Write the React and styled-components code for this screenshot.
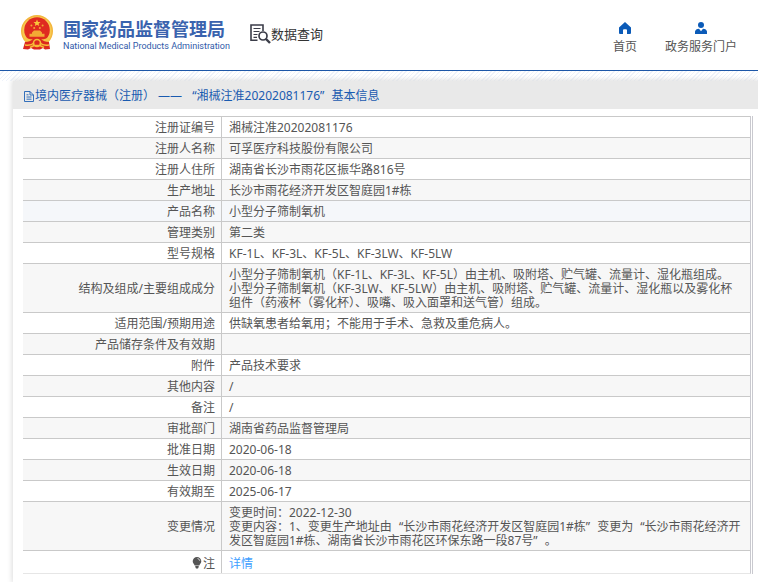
import React from 'react';
import styled, { createGlobalStyle } from 'styled-components';

const infoRows = [
  { label: '注册证编号', value: ['湘械注准20202081176'] },
  { label: '注册人名称', value: ['可孚医疗科技股份有限公司'] },
  { label: '注册人住所', value: ['湖南省长沙市雨花区振华路816号'] },
  { label: '生产地址', value: ['长沙市雨花经济开发区智庭园1#栋'] },
  { label: '产品名称', value: ['小型分子筛制氧机'], active: true },
  { label: '管理类别', value: ['第二类'] },
  { label: '型号规格', value: ['KF-1L、KF-3L、KF-5L、KF-3LW、KF-5LW'] },
  {
    label: '结构及组成/主要组成成分',
    value: [
      '小型分子筛制氧机（KF-1L、KF-3L、KF-5L）由主机、吸附塔、贮气罐、流量计、湿化瓶组成。',
      '小型分子筛制氧机（KF-3LW、KF-5LW）由主机、吸附塔、贮气罐、流量计、湿化瓶以及雾化杯组件（药液杯（雾化杯）、吸嘴、吸入面罩和送气管）组成。',
    ],
  },
  { label: '适用范围/预期用途', value: ['供缺氧患者给氧用；不能用于手术、急救及重危病人。'] },
  { label: '产品储存条件及有效期', value: [''] },
  { label: '附件', value: ['产品技术要求'] },
  { label: '其他内容', value: ['/'] },
  { label: '备注', value: ['/'] },
  { label: '审批部门', value: ['湖南省药品监督管理局'] },
  { label: '批准日期', value: ['2020-06-18'] },
  { label: '生效日期', value: ['2020-06-18'] },
  { label: '有效期至', value: ['2025-06-17'] },
  {
    label: '变更情况',
    value: [
      '变更时间：2022-12-30',
      '变更内容：1、变更生产地址由“长沙市雨花经济开发区智庭园1#栋”变更为“长沙市雨花经济开发区智庭园1#栋、湖南省长沙市雨花区环保东路一段87号”。',
    ],
  },
];

// curly quotes take a full character cell in Chinese text, pad the narrow latin ones
const padQuotes = (text) =>
  text.split(/([“”])/).map((part, idx) => {
    if (part === '“') return <OpenQuote key={idx}>{part}</OpenQuote>;
    if (part === '”') return <CloseQuote key={idx}>{part}</CloseQuote>;
    return part;
  });

const Emblem = () => (
  <svg width="34" height="36" viewBox="0 0 34 36" aria-hidden="true">
    <circle cx="17" cy="16" r="16" fill="#f3b63d" />
    <circle cx="17" cy="16" r="14.6" fill="#f8c951" />
    <circle cx="17" cy="15" r="12.8" fill="#df2a20" />
    <path d="M17 4.6l1 2.3 2.5.2-1.9 1.6.6 2.4-2.2-1.3-2.2 1.3.6-2.4-1.9-1.6 2.5-.2z" fill="#f9c83c" />
    <g fill="#f3a934">
      <circle cx="11.4" cy="10.5" r="1" />
      <circle cx="22.6" cy="10.5" r="1" />
      <circle cx="14.2" cy="13" r="1" />
      <circle cx="19.8" cy="13" r="1" />
      <path d="M12 17.4l2-2h6l2 2v1.4h2.5v3h-15v-3H12z" />
    </g>
    <path d="M4 22.5q13 4.500 26 0l-2 6H6z" fill="#f5c443" />
    <path d="M5 27q5 0 8-3 4-2 8 0 3 3 8 3l1 7-5 .5-2-1.500-3 1.500h-6l-3-1.500-3 1.500-5-.5z" fill="#dc271f" />
    <circle cx="17" cy="28" r="3.500" fill="none" stroke="#f6bd38" strokeWidth="1.600" />
    <path d="M5 30q6 1 9-2M29 30q-6 1-9-2M10 32.500l4-2h6l4 2" fill="none" stroke="#f6bd38" strokeWidth="1.500" />
  </svg>
);

const QueryIcon = () => (
  <svg width="21" height="20" viewBox="0 0 21 20" fill="none" stroke="#3b3d49" aria-hidden="true">
    <path d="M7.500 16.200H1V1h12v6" strokeWidth="1.600" />
    <path d="M3.500 4.500h7M3.500 7.500h6M3.500 10.500h4M3.500 13.300h3.500" strokeWidth="1.200" />
    <circle cx="13" cy="12" r="4" strokeWidth="1.700" />
    <path d="M16 15l4 4" strokeWidth="2.400" />
  </svg>
);

const HomeIcon = () => (
  <svg width="12" height="12" viewBox="0 0 12 12" fill="#0b5bb8" aria-hidden="true">
    <path d="M6 0L0 5.500V11q0 1 1 1h3V8.200q0-1 1-1h2q1 0 1 1V12h3q1 0 1-1V5.500z" />
  </svg>
);

const UserIcon = () => (
  <svg width="12" height="12" viewBox="0 0 12 12" fill="#0b5bb8" aria-hidden="true">
    <circle cx="6" cy="3" r="3" />
    <path d="M0 12v-2.500Q.5 7 4 6.700l2 2.500 2-2.500q3.500.3 4 2.800V12z" />
  </svg>
);

const DocIcon = () => (
  <svg width="10" height="11" viewBox="0 0 10 11" fill="none" stroke="#1f62b5" aria-hidden="true">
    <path d="M.5.5H6L9.500 4v6.500h-9zM6 .5V4h3.500M2.500 6h5M2.500 8.200h5M2.500 3.800h2" strokeWidth=".9" />
  </svg>
);

const BulbIcon = () => (
  <svg width="10" height="12" viewBox="0 0 10 12" aria-hidden="true">
    <path d="M5 0a4.300 4.300 0 0 1 4.300 4.300c0 2-1.500 2.800-2 4.200H2.700C2.200 7.100.7 6.300.7 4.300A4.300 4.300 0 0 1 5 0zM3.300 9h3.400v1L6 11.500H4L3.300 10z" fill="#555" />
    <path d="M5.500 1.500q2 .3 2.300 2.300" stroke="#ddd" strokeWidth=".9" fill="none" />
  </svg>
);

const App = () => {
  return (
    <>
      <GlobalStyle />
      <Header>
        <Brand href="#">
          <Emblem />
          <BrandText>
            <BrandName>国家药品监督管理局</BrandName>
            <BrandSub>National Medical Products Administration</BrandSub>
          </BrandText>
        </Brand>
        <QueryLink href="#">
          <QueryIcon />
          数据查询
        </QueryLink>
        <Nav>
          <NavLink href="#"><HomeIcon />首页</NavLink>
          <NavLink href="#"><UserIcon />政务服务门户</NavLink>
        </Nav>
      </Header>
      <Hatch />
      <Card>
        <CardTitle>
          <DocIcon />
          <span>境内医疗器械（注册） —— {padQuotes('“湘械注准20202081176”')}基本信息</span>
        </CardTitle>
        <TableWrap>
          <InfoTable>
            <tbody>
              {infoRows.map((row) => (
                <Row key={row.label} $active={row.active}>
                  <Label scope="row">{row.label}</Label>
                  <Value>
                    {row.value.map((line, idx) => (
                      <div key={idx}>{padQuotes(line)}</div>
                    ))}
                  </Value>
                </Row>
              ))}
              <NoteRow>
                <Label scope="row"><BulbIcon />注</Label>
                <Value><DetailLink href="#">详情</DetailLink></Value>
              </NoteRow>
            </tbody>
          </InfoTable>
        </TableWrap>
      </Card>
    </>
  );
};

export default App;

const GlobalStyle = createGlobalStyle`
  body {
    margin: 0;
    background: #fff;
    color: #555;
    font-family: "Noto Sans", "Noto Sans CJK SC", sans-serif;
    font-size: 12px;
    line-height: 14px;
  }
  * {
    box-sizing: border-box;
  }
  a {
    text-decoration: none;
  }
`;

const OpenQuote = styled.span`
  padding-left: 7px;
`;

const CloseQuote = styled.span`
  padding-right: 7px;
`;

const Header = styled.header`
  display: flex;
  align-items: flex-start;
  height: 71px;
  padding: 0 21px 0 20px;
  border-bottom: 1px solid #1d57a8;
`;

const Brand = styled.a`
  display: flex;
  gap: 9px;
  padding-top: 15px;
`;

const BrandText = styled.span`
  display: flex;
  flex-direction: column;
  padding-top: 3px;
`;

const BrandName = styled.span`
  font-family: "Noto Sans CJK SC", sans-serif;
  font-size: 18px;
  font-weight: 700;
  line-height: 20px;
  color: #3a63ae;
  white-space: nowrap;
`;

const BrandSub = styled.span`
  font-family: Roboto, sans-serif;
  font-size: 9px;
  font-weight: 400;
  line-height: 16px;
  color: #2f59a8;
  white-space: nowrap;
`;

const QueryLink = styled.a`
  display: flex;
  align-items: center;
  margin-left: 20px;
  padding-top: 24px;
  font-size: 13px;
  line-height: 20px;
  color: #333;
  white-space: nowrap;
`;

const Nav = styled.nav`
  display: flex;
  gap: 28px;
  margin-left: auto;
  padding-top: 22px;
`;

const NavLink = styled.a`
  display: flex;
  flex-direction: column;
  align-items: center;
  gap: 6px;
  color: #555;
  white-space: nowrap;
`;

const Hatch = styled.div`
  height: 10px;
  background: repeating-linear-gradient(135deg, #fff 0 2px, #eef2fa 2px 3px);
`;

const Card = styled.main`
  margin-left: 13px;
  padding-bottom: 8px;
  background: #fff;
  box-shadow: 0 0 5px 1px #ddd;
`;

const CardTitle = styled.h1`
  display: flex;
  align-items: center;
  gap: 1px;
  height: 28px;
  margin: 0;
  padding: 2px 0 0 11px;
  background: #e9e9e9;
  color: #1a5bb0;
  font-size: 12px;
  font-weight: 400;
  white-space: nowrap;
`;

const TableWrap = styled.div`
  margin: 7px 5px 0 10px;
  padding-right: 1px;
  border-right: 1px solid #c9c9cf;
`;

const InfoTable = styled.table`
  width: 100%;
  border-collapse: separate;
  border-spacing: 0;
  border-right: 1px solid #c9c9cf;
  border-bottom: 1px solid #e6e6e6;
`;

const Label = styled.th`
  width: 199px;
  padding: 4px 6px 2px;
  border-top: 1px solid #c9c9c9;
  border-right: 1px solid #c9c9c9;
  font-weight: 400;
  text-align: right;
  vertical-align: middle;

  svg {
    margin-right: 1px;
    vertical-align: -1px;
  }
`;

const Value = styled.td`
  padding: 4px 7px 2px;
  border-top: 1px solid #c9c9c9;
  vertical-align: middle;

  div {
    min-height: 14px;
  }
`;

const Row = styled.tr`
  background: #fff;

  &:nth-child(even) {
    background: #f7f7f7;
  }

  && {
    ${props => props.$active && 'background: #f5f7fa;'}
  }
`;

const NoteRow = styled.tr`
  && > * {
    padding-top: 6px;
  }
`;

const DetailLink = styled.a`
  color: #409eff;
`;
